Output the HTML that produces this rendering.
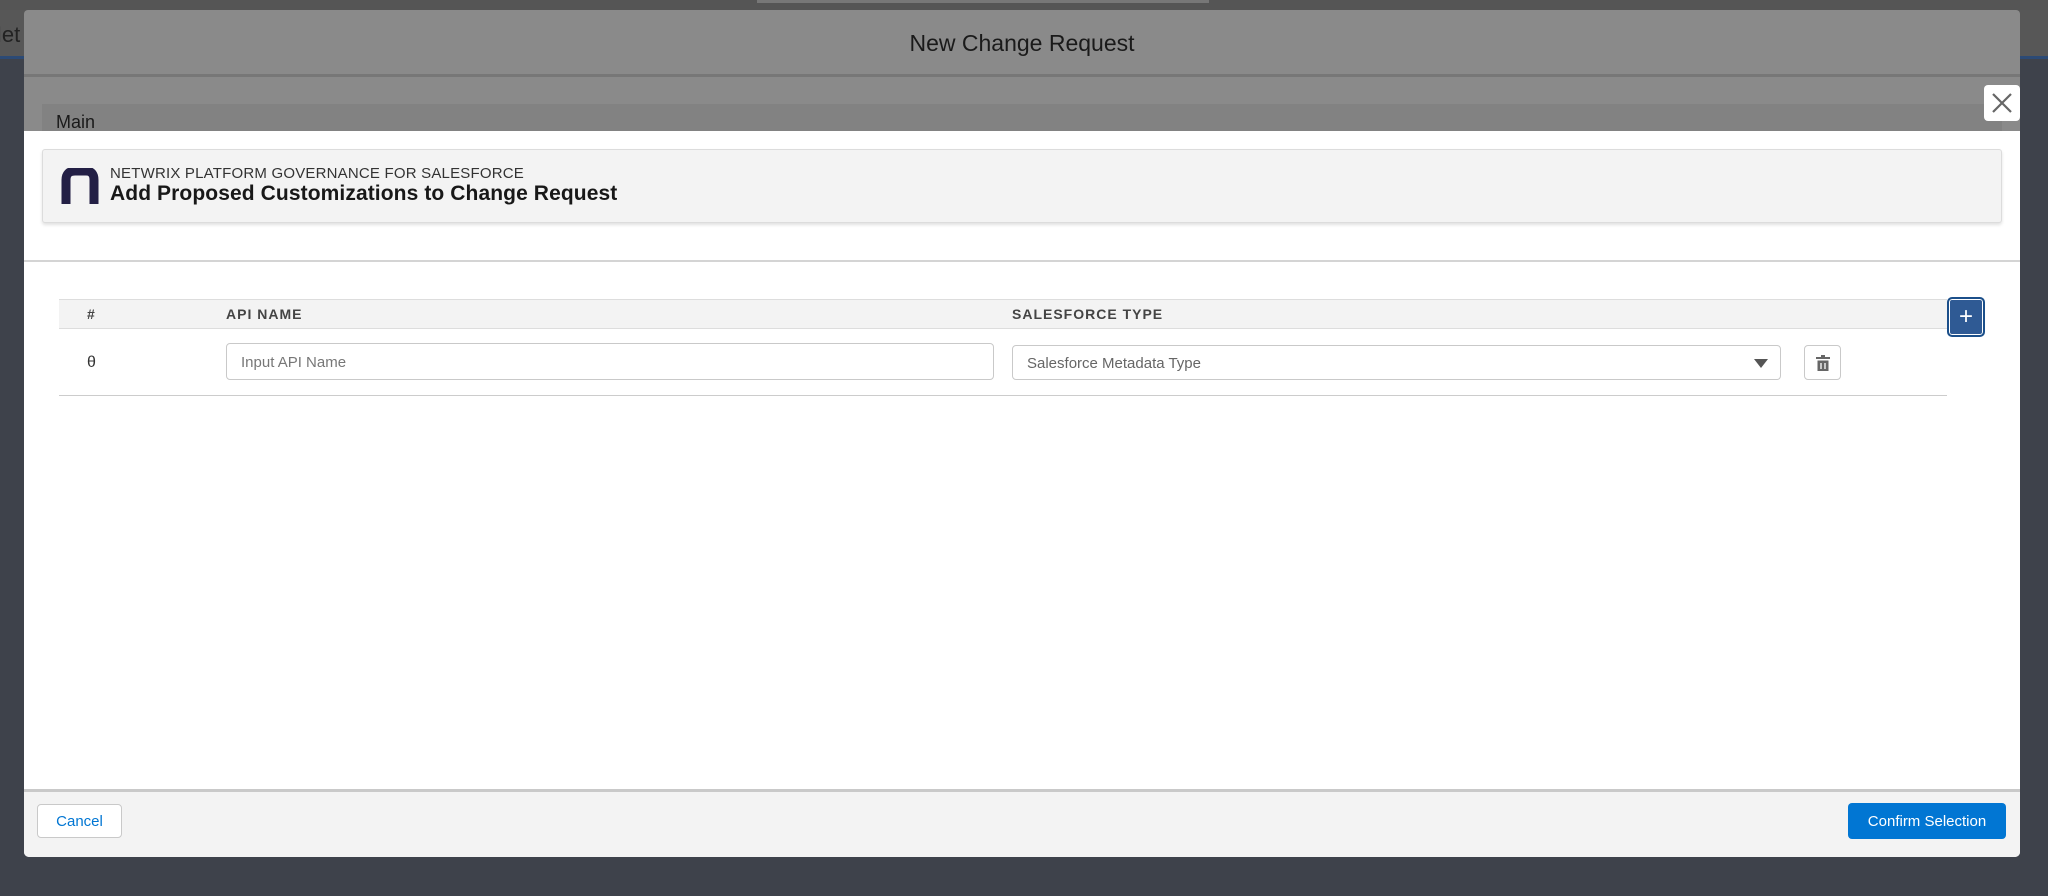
<!DOCTYPE html>
<html><head><meta charset="utf-8"><style>
*{box-sizing:border-box;margin:0;padding:0}
body{width:2048px;height:896px;background:#3e424b;position:relative;overflow:hidden;font-family:"Liberation Sans",sans-serif;color:#181818}
.abs{position:absolute}
</style></head><body>
<div class="abs" style="left:0;top:0;width:2048px;height:10px;background:#555"></div>
<div class="abs" style="left:757px;top:0;width:452px;height:3px;background:#777"></div>
<div class="abs" style="left:0;top:10px;width:2048px;height:46px;background:#575757"></div>
<div class="abs" style="left:0;top:56px;width:2048px;height:3px;background:#2c4a75"></div>
<div class="abs" style="left:-14px;top:22px;font-size:22px;color:#222">Net</div>
<!-- outer modal -->
<div class="abs" style="left:24px;top:10px;width:1996px;height:150px;background:#8a8a8a;border-radius:4px 4px 0 0"></div>
<div class="abs" style="left:24px;top:74px;width:1996px;height:3px;background:#777"></div>
<div class="abs" style="left:24px;top:30px;width:1996px;text-align:center;font-size:23px;color:#1a1a1a">New Change Request</div>
<div class="abs" style="left:42px;top:104px;width:1960px;height:30px;background:#828282"></div>
<div class="abs" style="left:56px;top:112px;font-size:18px;color:#1a1a1a">Main</div>
<!-- close -->
<div class="abs" style="left:1984px;top:85px;width:36px;height:36px;background:#fff;border-radius:4px;text-align:center;">
<svg width="36" height="36"><path d="M9 9L27 27M27 9L9 27" stroke="#666" stroke-width="2.2"/></svg></div>
<!-- inner modal -->
<div class="abs" style="left:24px;top:131px;width:1996px;height:726px;background:#fff;border-radius:0 0 5px 5px;overflow:hidden">
 <div class="abs" style="left:18px;top:18px;width:1960px;height:74px;background:#f3f3f3;border:1px solid #dcdcdc;border-radius:3px;box-shadow:0 2px 3px rgba(0,0,0,.12)">
  <svg class="abs" style="left:18px;top:18px" width="38" height="36"><path d="M5 36V12Q5 3 14 3H25Q33 3 33 12V36" fill="none" stroke="#231f45" stroke-width="9"/></svg>
  <div class="abs" style="left:67px;top:15px;font-size:15px;color:#333;letter-spacing:.2px">NETWRIX PLATFORM GOVERNANCE FOR SALESFORCE</div>
  <div class="abs" style="left:67px;top:32px;font-size:21px;font-weight:bold;color:#181818;letter-spacing:.1px">Add Proposed Customizations to Change Request</div>
 </div>
 <div class="abs" style="left:0;top:129px;width:1996px;height:2px;background:#d4d4d4"></div>
 <div class="abs" style="left:35px;top:168px;width:1888px;height:30px;background:#f3f3f3;border-top:1px solid #ddd;border-bottom:1px solid #ddd"></div>
 <div class="abs" style="left:63px;top:175px;font-size:14px;font-weight:bold;color:#444">#</div>
 <div class="abs" style="left:202px;top:175px;font-size:14px;font-weight:bold;color:#444;letter-spacing:1px">API NAME</div>
 <div class="abs" style="left:988px;top:175px;font-size:14px;font-weight:bold;color:#444;letter-spacing:1px">SALESFORCE TYPE</div>
 <div class="abs" style="left:1923px;top:166px;width:38px;height:40px;background:#2f5a94;border:2px solid #1b4f8a;border-radius:5px;box-shadow:0 0 0 1px #fff inset;color:#fff;font-size:24px;text-align:center;line-height:35px">+</div>
 <div class="abs" style="left:63px;top:223px;font-size:16px;color:#333">θ</div>
 <div class="abs" style="left:202px;top:212px;width:768px;height:37px;border:1px solid #c9c9c9;border-radius:4px;font-size:15px;color:#777;padding:10px 14px">Input API Name</div>
 <div class="abs" style="left:988px;top:214px;width:769px;height:35px;border:1px solid #c9c9c9;border-radius:4px;font-size:15px;color:#666;padding:9px 14px">Salesforce Metadata Type
  <svg class="abs" style="right:12px;top:13px" width="14" height="10"><path d="M0 0H14L7 9Z" fill="#555"/></svg></div>
 <div class="abs" style="left:1780px;top:214px;width:37px;height:35px;border:1px solid #c9c9c9;border-radius:4px">
  <svg class="abs" style="left:11px;top:9px" width="14" height="17"><path d="M5 0H9V2H14V4H0V2H5Z" fill="#666"/><path d="M1.5 5.5H12.5V16H1.5Z" fill="#666"/><path d="M5 8V14M9 8V14" stroke="#fff" stroke-width="1.3"/></svg></div>
 <div class="abs" style="left:35px;top:264px;width:1888px;height:1px;background:#ccc"></div>
 <!-- footer -->
 <div class="abs" style="left:0;top:658px;width:1996px;height:68px;background:#f3f3f3;border-top:3px solid #c9c9c9"></div>
 <div class="abs" style="left:13px;top:673px;width:85px;height:34px;background:#fff;border:1px solid #c9c9c9;border-radius:4px;color:#0176d3;font-size:15px;text-align:center;line-height:34px">Cancel</div>
 <div class="abs" style="left:1824px;top:672px;width:158px;height:36px;background:#0176d3;border-radius:4px;color:#fff;font-size:15px;text-align:center;line-height:37px">Confirm Selection</div>
</div>
</body></html>
